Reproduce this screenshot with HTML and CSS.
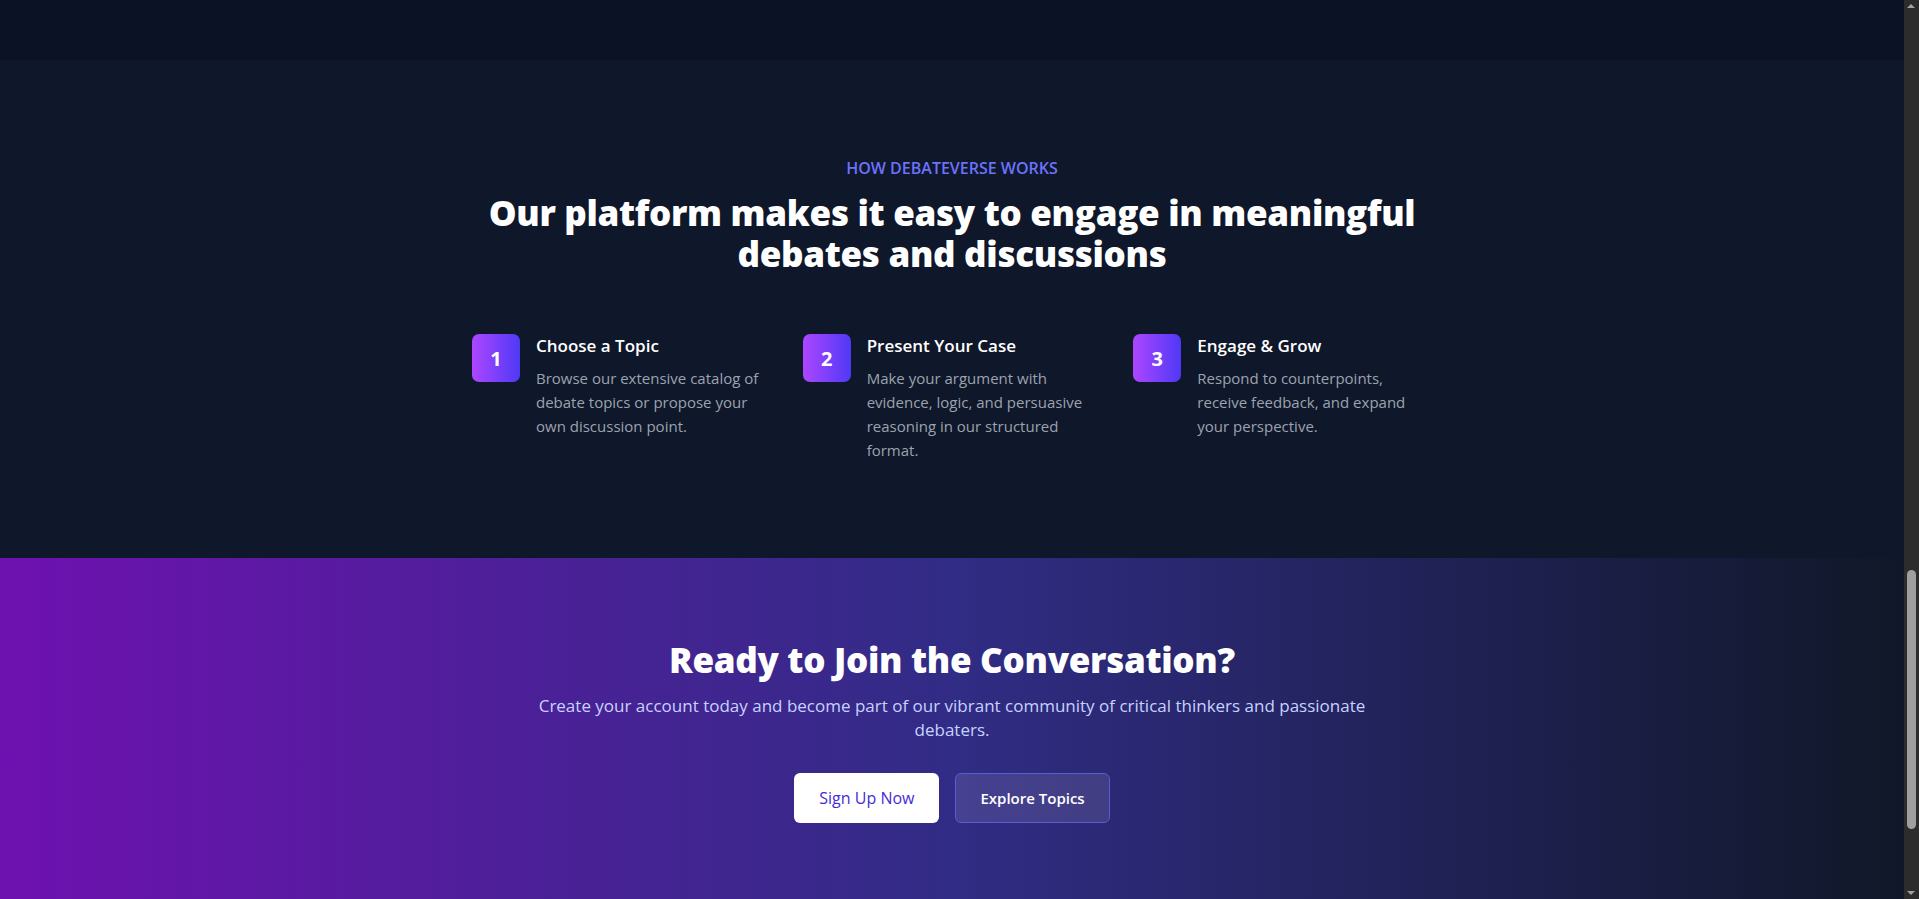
FILE: index.html
```html
<!DOCTYPE html>
<html lang="en">
<head>
<meta charset="utf-8">
<title>DebateVerse</title>
<link rel="stylesheet" href="styles.css">
</head>
<body>
<div class="prev-section"></div>
<section class="how">
  <p class="eyebrow">HOW DEBATEVERSE WORKS</p>
  <h2 class="how-title">Our platform makes it easy to engage in meaningful debates and discussions</h2>
  <div class="steps">
    <div class="step">
      <div class="step-num">1</div>
      <div class="step-body">
        <h3 class="step-title">Choose a Topic</h3>
        <p class="step-text">Browse our extensive catalog of debate topics or propose your own discussion point.</p>
      </div>
    </div>
    <div class="step">
      <div class="step-num">2</div>
      <div class="step-body">
        <h3 class="step-title">Present Your Case</h3>
        <p class="step-text">Make your argument with evidence, logic, and persuasive reasoning in our structured format.</p>
      </div>
    </div>
    <div class="step">
      <div class="step-num">3</div>
      <div class="step-body">
        <h3 class="step-title">Engage &amp; Grow</h3>
        <p class="step-text">Respond to counterpoints, receive feedback, and expand your perspective.</p>
      </div>
    </div>
  </div>
</section>
<section class="cta">
  <h2 class="cta-title">Ready to Join the Conversation?</h2>
  <p class="cta-text">Create your account today and become part of our vibrant community of critical thinkers and passionate debaters.</p>
  <div class="cta-actions">
    <a class="btn btn-light" href="#">Sign Up Now</a>
    <a class="btn btn-ghost" href="#">Explore Topics</a>
  </div>
</section>
<div class="scrollbar" aria-hidden="true">
  <span class="sb-arrow sb-up"></span>
  <span class="sb-thumb"></span>
  <span class="sb-arrow sb-down"></span>
</div>
</body>
</html>
```
FILE: styles.css
```css
* { box-sizing: border-box; }
html, body { margin: 0; padding: 0; }
body {
  margin-right: 15px;
  font-family: "Open Sans", "Noto Sans", sans-serif;
  background: #0f172a;
  color: #fff;
}
.prev-section {
  height: 60px;
  background: #0c1226;
}
.how {
  background: #0f172a;
  padding: 96px 16px 96px;
  text-align: center;
}
.eyebrow {
  margin: 0;
  font-size: 16px;
  line-height: 24px;
  font-weight: 600;
  color: #6c72fa;
}
.how-title {
  margin: 12px auto 0;
  max-width: 960px;
  font-size: 35px;
  line-height: 41px;
  font-weight: 800;
  letter-spacing: -0.3px;
  color: #fff;
}
.steps {
  margin: 60px auto 0;
  max-width: 960px;
  display: grid;
  grid-template-columns: repeat(3, 1fr);
  gap: 32px;
  text-align: left;
}
.step {
  display: flex;
  align-items: flex-start;
}
.step-num {
  flex: 0 0 48px;
  width: 48px;
  height: 48px;
  border-radius: 7px;
  background: linear-gradient(to right, #ad46ff, #4f39f6);
  display: flex;
  align-items: center;
  justify-content: center;
  font-size: 20px;
  font-weight: 700;
  color: #fff;
}
.step-body {
  margin-left: 16px;
}
.step-title {
  margin: 0;
  font-size: 17px;
  line-height: 24px;
  font-weight: 600;
  color: #fff;
}
.step-text {
  margin: 8px 0 0;
  font-size: 15px;
  line-height: 24px;
  color: #9ca3af;
}
.cta {
  background: linear-gradient(to right, #6e11b0 0%, #312c85 50%, #101828 100%);
  padding: 80px 16px 96px;
  text-align: center;
}
.cta-title {
  margin: 0;
  font-size: 35px;
  line-height: 44px;
  font-weight: 800;
  letter-spacing: -0.3px;
}
.cta-text {
  margin: 12px auto 0;
  max-width: 896px;
  font-size: 17px;
  line-height: 24px;
  color: #c7d2fe;
}
.cta-actions {
  margin-top: 31px;
  display: flex;
  justify-content: center;
  gap: 16px;
}
.btn {
  display: inline-block;
  padding: 12px 24px;
  border-radius: 6px;
  border: 1px solid transparent;
  font-size: 15px;
  line-height: 24px;
  font-weight: 600;
  text-decoration: none;
}
.btn-light {
  background: #fff;
  color: #432dd7;
  font-size: 16px;
  font-weight: 500;
}
.btn-ghost {
  background: rgba(255, 255, 255, 0.1);
  border-color: #5b5ccf;
  color: #fff;
}

/* browser scrollbar as seen in the capture */
.scrollbar {
  position: fixed;
  top: 0;
  right: 0;
  width: 15px;
  height: 100vh;
  background: #2c2c2c;
}
.sb-thumb {
  position: absolute;
  left: 3px;
  width: 9px;
  top: 570px;
  height: 259px;
  border-radius: 5px;
  background: #9f9f9f;
}
.sb-arrow {
  position: absolute;
  left: 3px;
  width: 0;
  height: 0;
  border-left: 4.5px solid transparent;
  border-right: 4.5px solid transparent;
}
.sb-up {
  top: 4px;
  border-bottom: 4px solid #a3a3a3;
}
.sb-down {
  bottom: 4px;
  border-top: 4px solid #a3a3a3;
}
```
